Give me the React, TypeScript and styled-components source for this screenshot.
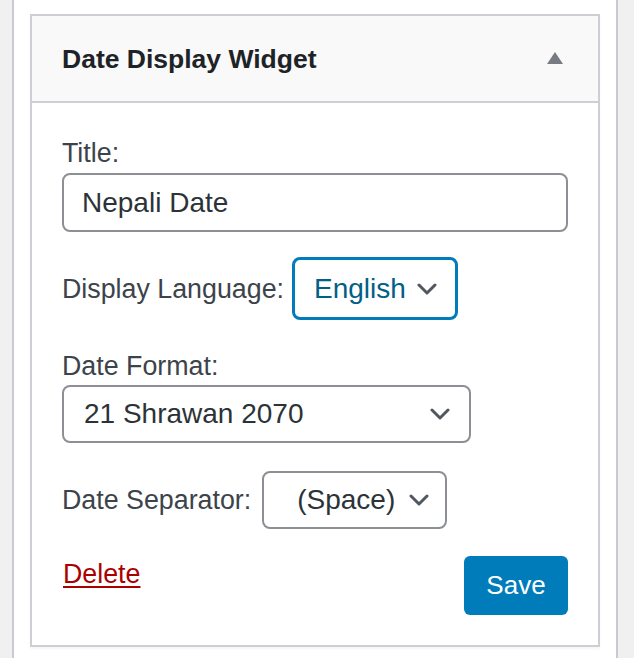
import React from "react";
import styled, { createGlobalStyle } from "styled-components";

const GlobalStyle = createGlobalStyle`
  html, body { margin: 0; padding: 0; }
  body {
    background: #f0f0f1;
    font-family: "Liberation Sans", Arial, sans-serif;
    -webkit-font-smoothing: antialiased;
  }
  * { box-sizing: border-box; }
`;

const Page = styled.div`
  height: 658px;
  overflow: hidden;
  background: #f0f0f1;
  padding: 0 16px 0 12px;
`;

const Panel = styled.div`
  height: 100%;
  background: #fff;
  border-left: 2px solid #c8ccd1;
  border-right: 2px solid #c8ccd1;
  padding: 14px 16px 0 16px;
`;

const Widget = styled.div`
  border: 2px solid #ccd0d4;
  background: #fff;
  box-shadow: 0 2px 2px rgba(0, 0, 0, 0.04);
`;

const Header = styled.div`
  height: 87px;
  background: #f9f9f9;
  border-bottom: 2px solid #ccd0d4;
  display: flex;
  align-items: center;
  justify-content: space-between;
  padding: 2px 35px 0 30px;
`;

const Title = styled.h3`
  margin: 0;
  font-size: 26.5px;
  font-weight: 700;
  color: #1d2327;
`;

const Toggle = styled.span`
  width: 0;
  height: 0;
  border-left: 8px solid transparent;
  border-right: 8px solid transparent;
  border-bottom: 12px solid #787c82;
  margin-top: -4px;
`;

const Body = styled.div`
  padding: 32px 30px 30px 30px;
  display: flex;
  flex-direction: column;
`;

const Label = styled.label`
  display: block;
  font-size: 26.8px;
  line-height: 36px;
  color: #3c434a;
  white-space: nowrap;
`;

const TextInput = styled.input`
  margin-top: 2px;
  width: 100%;
  height: 59px;
  border: 2px solid #8c8f94;
  border-radius: 8px;
  padding: 0 18px;
  font-family: inherit;
  font-size: 28px;
  color: #2c3338;
  background: #fff;
  outline: none;
`;

const Row = styled.div<{ $gap: number; $space?: number }>`
  margin-top: ${(p) => p.$gap}px;
  display: flex;
  align-items: center;
  gap: ${(p) => p.$space ?? 7}px;
`;

const Select = styled.div<{
  $width: number;
  $height: number;
  $focused?: boolean;
  $padLeft: number;
  $padRight: number;
  $top?: number;
}>`
  width: ${(p) => p.$width}px;
  height: ${(p) => p.$height}px;
  margin-top: ${(p) => p.$top ?? 0}px;
  border: ${(p) => (p.$focused ? "3px solid #007cba" : "2px solid #8c8f94")};
  border-radius: 8px;
  display: flex;
  align-items: center;
  justify-content: space-between;
  padding: 0 ${(p) => p.$padRight}px 0 ${(p) => p.$padLeft}px;
  font-size: 28px;
  color: ${(p) => (p.$focused ? "#016087" : "#2c3338")};
  background: #fff;
  white-space: nowrap;
`;

const Chevron = () => (
  <svg width="20" height="12" viewBox="0 0 20 12" fill="none">
    <path
      d="M2 2 L10 10 L18 2"
      stroke="#50575e"
      strokeWidth="3"
      strokeLinecap="round"
      strokeLinejoin="round"
    />
  </svg>
);

const Actions = styled.div`
  margin-top: 27px;
  display: flex;
  justify-content: space-between;
  align-items: flex-start;
`;

const DeleteLink = styled.a`
  font-size: 26.8px;
  line-height: 36px;
  color: #aa0000;
  text-decoration: underline;
  text-underline-offset: 3px;
  text-decoration-thickness: 2px;
  cursor: pointer;
  margin-left: 1px;
`;

const SaveButton = styled.button`
  width: 104px;
  height: 59px;
  border: none;
  border-radius: 6px;
  background: #007cba;
  color: #fff;
  font-family: inherit;
  font-size: 26px;
  padding: 0;
  cursor: pointer;
`;

export default function App() {
  return (
    <>
      <GlobalStyle />
      <Page>
        <Panel>
          <Widget>
            <Header>
              <Title>Date Display Widget</Title>
              <Toggle />
            </Header>
            <Body>
              <Label>Title:</Label>
              <TextInput readOnly value="Nepali Date" />
              <Row $gap={25} $space={8}>
                <Label>Display Language:</Label>
                <Select $width={166} $height={63} $focused $padLeft={19} $padRight={18}>
                  English
                  <Chevron />
                </Select>
              </Row>
              <Row $gap={28}>
                <Label>Date Format:</Label>
              </Row>
              <Select $width={409} $height={58} $padLeft={20} $padRight={19} $top={1}>
                21 Shrawan 2070
                <Chevron />
              </Select>
              <Row $gap={28} $space={11}>
                <Label>Date Separator:</Label>
                <Select $width={185} $height={58} $padLeft={33} $padRight={16}>
                  (Space)
                  <Chevron />
                </Select>
              </Row>
              <Actions>
                <DeleteLink>Delete</DeleteLink>
                <SaveButton>Save</SaveButton>
              </Actions>
            </Body>
          </Widget>
        </Panel>
      </Page>
    </>
  );
}
